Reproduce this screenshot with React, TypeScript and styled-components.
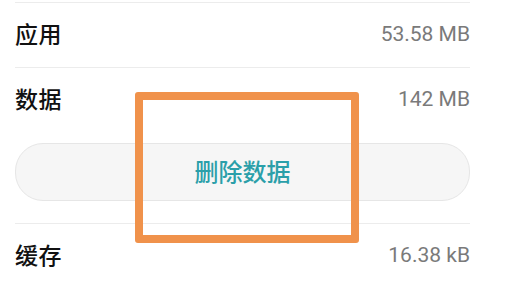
import React from "react";
import styled, { createGlobalStyle } from "styled-components";

const GlobalStyle = createGlobalStyle`
  html, body {
    margin: 0;
    padding: 0;
    background: #ffffff;
  }
  body {
    font-family: "Noto Sans CJK SC", "Noto Sans", sans-serif;
    -webkit-font-smoothing: antialiased;
  }
`;

type StorageItem = {
  label: string;
  value: string;
};

const items: StorageItem[] = [
  { label: "应用", value: "53.58 MB" },
  { label: "数据", value: "142 MB" },
];

const App: React.FC = () => {
  return (
    <>
      <GlobalStyle />
      <Screen>
        <List>
          <Divider />
          {items.map((item, i) => (
            <React.Fragment key={item.label}>
              <Row>
                <RowLabel>{item.label}</RowLabel>
                <RowValue>{item.value}</RowValue>
              </Row>
              {i === 0 && <Divider />}
            </React.Fragment>
          ))}
          <ButtonWrap>
            <ClearButton>删除数据</ClearButton>
          </ButtonWrap>
          <Divider />
          <Row>
            <RowLabel>缓存</RowLabel>
            <RowValue>16.38 kB</RowValue>
          </Row>
        </List>
        <Highlight />
      </Screen>
    </>
  );
};

const Screen = styled.div`
  position: relative;
  width: 514px;
  height: 282px;
  overflow: hidden;
  background: #ffffff;
`;

const List = styled.div`
  display: flex;
  flex-direction: column;
  padding: 2px 44px 0 15px;
`;

const Divider = styled.div`
  height: 1px;
  background: #ececec;
`;

const Row = styled.div`
  height: 64px;
  display: flex;
  align-items: center;
  justify-content: space-between;
`;

const RowLabel = styled.span`
  font-size: 23px;
  font-weight: 500;
  line-height: 1;
  color: #111111;
  letter-spacing: 0.5px;
  margin-top: -3px;
`;

const RowValue = styled.span`
  font-family: Roboto, "Noto Sans", sans-serif;
  font-size: 21px;
  line-height: 1;
  color: #7a7a7a;
  margin-top: -1px;
`;

const ButtonWrap = styled.div`
  padding: 11px 0 22px;
`;

const ClearButton = styled.div`
  height: 53px;
  border: 1px solid #e6e6e6;
  border-radius: 28px;
  background: #f6f6f6;
  display: flex;
  align-items: center;
  justify-content: center;
  font-size: 24px;
  font-weight: 500;
  line-height: 1;
  color: #2b9fa9;
  padding-bottom: 3px;
`;

const Highlight = styled.div`
  position: absolute;
  left: 135px;
  top: 92px;
  width: 208px;
  height: 135px;
  border: 8px solid #f0924b;
  border-radius: 3px;
`;

export default App;
